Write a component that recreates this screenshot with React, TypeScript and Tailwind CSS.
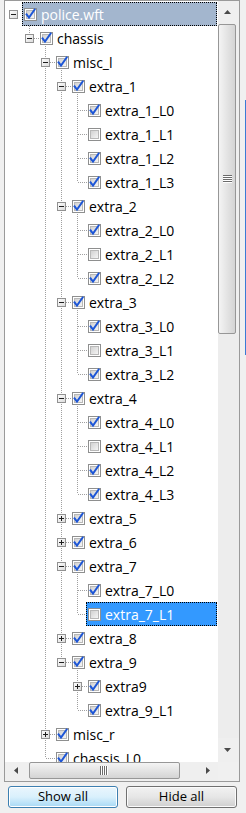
type TreeNode = {
  label: string;
  checked: boolean;
  open?: boolean;
  children?: TreeNode[];
  hl?: "root" | "sel";
};

type Row = {
  node: TreeNode;
  level: number;
  last: boolean;
  cont: boolean[];
};

const leaf = (label: string, checked = true, hl?: "sel"): TreeNode => ({ label, checked, hl });

const extra = (n: number, states: boolean[]): TreeNode => ({
  label: `extra_${n}`,
  checked: true,
  open: true,
  children: states.map((c, i) => leaf(`extra_${n}_L${i}`, c)),
});

const tree: TreeNode[] = [
  {
    label: "police.wft",
    checked: true,
    open: true,
    hl: "root",
    children: [
      {
        label: "chassis",
        checked: true,
        open: true,
        children: [
          {
            label: "misc_l",
            checked: true,
            open: true,
            children: [
              extra(1, [true, false, true, true]),
              extra(2, [true, false, true]),
              extra(3, [true, false, true]),
              extra(4, [true, false, true, true]),
              { label: "extra_5", checked: true, children: [leaf("extra_5_L0")] },
              { label: "extra_6", checked: true, children: [leaf("extra_6_L0")] },
              {
                label: "extra_7",
                checked: true,
                open: true,
                children: [leaf("extra_7_L0"), leaf("extra_7_L1", false, "sel")],
              },
              { label: "extra_8", checked: true, children: [leaf("extra_8_L0")] },
              {
                label: "extra_9",
                checked: true,
                open: true,
                children: [
                  { label: "extra9", checked: true, children: [leaf("extra9_L0")] },
                  leaf("extra_9_L1"),
                ],
              },
            ],
          },
          { label: "misc_r", checked: true, children: [leaf("extra_10")] },
          leaf("chassis_L0"),
        ],
      },
    ],
  },
];

function flatten(nodes: TreeNode[], level: number, cont: boolean[], out: Row[]) {
  nodes.forEach((node, i) => {
    const last = i === nodes.length - 1;
    out.push({ node, level, last, cont });
    if (node.children && node.open) flatten(node.children, level + 1, [...cont, !last], out);
  });
  return out;
}

const rows = flatten(tree, 0, [], []);

const DOT = "#a0a0a0";

function Lines({ row }: { row: Row }) {
  const { level, last, cont, node } = row;
  const lx = (a: number) => 8.5 + 16 * a;
  const segs: JSX.Element[] = [];
  for (let a = 1; a < level; a++) {
    if (cont[a]) segs.push(<line key={"c" + a} x1={lx(a)} y1={0} x2={lx(a)} y2={24} />);
  }
  if (level >= 1) {
    segs.push(<line key="v" x1={lx(level)} y1={0} x2={lx(level)} y2={last ? 12 : 24} />);
    segs.push(<line key="h" x1={lx(level)} y1={12.5} x2={19 + 16 * level} y2={12.5} />);
  }
  if (node.open && node.children) {
    segs.push(<line key="p" x1={lx(level + 1)} y1={20} x2={lx(level + 1)} y2={24} />);
  }
  return (
    <svg
      className="absolute inset-0 pointer-events-none"
      width="213"
      height="24"
      stroke={DOT}
      strokeWidth="1"
      strokeDasharray="1 1"
      shapeRendering="crispEdges"
    >
      {segs}
    </svg>
  );
}

function Expander({ open }: { open: boolean }) {
  return (
    <svg width="9" height="9" viewBox="0 0 9 9" className="relative">
      <defs>
        <linearGradient id="exg" x1="0" y1="0" x2="1" y2="1">
          <stop offset="0" stopColor="#ffffff" />
          <stop offset="1" stopColor="#dadada" />
        </linearGradient>
      </defs>
      <rect x="0.5" y="0.5" width="8" height="8" fill="url(#exg)" stroke="#919191" />
      <line x1="2" y1="4.5" x2="7" y2="4.5" stroke="#1e1e1e" />
      {!open && <line x1="4.5" y1="2" x2="4.5" y2="7" stroke="#1e1e1e" />}
    </svg>
  );
}

function CheckBox({ checked }: { checked: boolean }) {
  return (
    <svg width="13" height="13" viewBox="0 0 13 13" className="shrink-0">
      <defs>
        <linearGradient id="cbg" x1="0" y1="0" x2="1" y2="1">
          <stop offset="0" stopColor="#cfcfcf" />
          <stop offset="1" stopColor="#f7f7f7" />
        </linearGradient>
      </defs>
      <rect x="0.5" y="0.5" width="12" height="12" fill="#ffffff" stroke="#8e8f8f" />
      <rect x="2.5" y="2.5" width="8" height="8" fill="url(#cbg)" stroke="#b8b8b8" />
      {checked && (
        <path
          d="M2.6 6.4 L5 9.6 L10.6 1.6"
          fill="none"
          stroke="#1d56d6"
          strokeWidth="2"
          strokeLinecap="square"
        />
      )}
    </svg>
  );
}

function TreeRow({ row }: { row: Row }) {
  const { node, level } = row;
  const hasKids = !!node.children;
  const hl =
    node.hl === "root"
      ? "bg-[#a3b6ce] text-white outline outline-1 outline-dotted outline-black -outline-offset-1"
      : node.hl === "sel"
        ? "bg-[#3399ff] text-white outline outline-1 outline-dotted outline-black -outline-offset-1"
        : "text-black";
  return (
    <div className="relative flex h-[24px] items-center">
      <Lines row={row} />
      <div className="shrink-0" style={{ width: level * 16 }} />
      <div className="flex w-[17px] shrink-0 items-center pl-[4px]">
        {hasKids && <Expander open={!!node.open} />}
      </div>
      <div className={`relative mr-[1px] flex h-[24px] min-w-0 flex-1 items-center gap-[4px] pl-[2px] ${hl}`}>
        <CheckBox checked={node.checked} />
        <span className="whitespace-nowrap">{node.label}</span>
      </div>
    </div>
  );
}

function Tri({ dir }: { dir: "up" | "down" | "left" | "right" }) {
  const pts = {
    up: "0,4 7,4 3.5,0",
    down: "0,0 7,0 3.5,4",
    left: "4,0 4,7 0,3.5",
    right: "0,0 0,7 4,3.5",
  }[dir];
  const w = dir === "up" || dir === "down" ? 7 : 4;
  const h = dir === "up" || dir === "down" ? 4 : 7;
  return (
    <svg width={w} height={h} viewBox={`0 0 ${w} ${h}`}>
      <polygon points={pts} fill="#4a4a4a" />
    </svg>
  );
}

function VGrip() {
  return (
    <svg width="9" height="9" viewBox="0 0 9 9">
      {[0.5, 2.5, 4.5, 6.5].map((y) => (
        <line key={y} x1="0" y1={y} x2="9" y2={y} stroke="#6b6b6b" />
      ))}
      {[1.5, 3.5, 5.5, 7.5].map((y) => (
        <line key={y} x1="0" y1={y} x2="9" y2={y} stroke="#ffffff" />
      ))}
    </svg>
  );
}

function HGrip() {
  return (
    <svg width="9" height="9" viewBox="0 0 9 9">
      {[0.5, 2.5, 4.5, 6.5].map((x) => (
        <line key={x} x1={x} y1="0" x2={x} y2="9" stroke="#6b6b6b" />
      ))}
      {[1.5, 3.5, 5.5, 7.5].map((x) => (
        <line key={x} x1={x} y1="0" x2={x} y2="9" stroke="#ffffff" />
      ))}
    </svg>
  );
}

export default function App() {
  return (
    <div
      className="flex h-[813px] w-[246px] overflow-hidden bg-[#f0f0f0] text-[14px]"
      style={{ fontFamily: '"Open Sans", "Liberation Sans", sans-serif' }}
    >
      <div className="flex w-[240px] flex-col pl-[4px]">
        {/* tree box */}
        <div className="flex h-[782px] w-[236px] flex-col border border-[#9a9a9a] bg-white">
          <div className="flex h-[761px]">
            <div className="w-[213px] overflow-hidden pt-[1px]">
              {rows.map((r, i) => (
                <TreeRow key={i} row={r} />
              ))}
            </div>
            {/* vertical scrollbar */}
            <div className="flex w-[21px] flex-col bg-[#efefef]">
              <div className="flex h-[22px] items-center justify-center pr-[3px]">
                <Tri dir="up" />
              </div>
              <div className="mt-[1px] flex h-[310px] w-[18px] items-center justify-center rounded-[2px] border border-[#979797] bg-gradient-to-r from-[#f4f4f4] to-[#d4d4d4]">
                <VGrip />
              </div>
              <div className="flex-1 bg-[#ededed]" />
              <div className="flex h-[24px] items-start justify-center pr-[3px] pt-[10px]">
                <Tri dir="down" />
              </div>
            </div>
          </div>
          {/* horizontal scrollbar */}
          <div className="flex h-[19px] bg-[#efefef]">
            <div className="flex w-[213px] items-start">
              <div className="flex h-[17px] w-[22px] items-center justify-center">
                <Tri dir="left" />
              </div>
              <div className="ml-[2px] flex h-[17px] w-[151px] items-center justify-center rounded-[2px] border border-[#979797] bg-gradient-to-b from-[#f4f4f4] to-[#d4d4d4]">
                <HGrip />
              </div>
              <div className="flex-1" />
              <div className="flex h-[17px] w-[21px] items-center justify-center">
                <Tri dir="right" />
              </div>
            </div>
            <div className="w-[21px] bg-[#f0f0f0]" />
          </div>
        </div>
        {/* buttons */}
        <div className="flex gap-[8px] pl-[4px] pt-[4px]">
          <button className="flex h-[22px] w-[110px] items-center justify-center rounded-[3px] border border-[#3c7fb1] bg-gradient-to-b from-[#eaf6fd] via-[#d9f0fc] to-[#a7d9f5] text-[13px] text-black shadow-[inset_0_0_0_1px_#ffffff]">
            Show all
          </button>
          <button className="flex h-[22px] w-[111px] items-center justify-center rounded-[3px] border border-[#707070] bg-gradient-to-b from-[#f2f2f2] via-[#e6e6e6] to-[#cfcfcf] text-[13px] text-black shadow-[inset_0_0_0_1px_#fbfbfb]">
            Hide all
          </button>
        </div>
      </div>
      <div className="flex w-[6px] justify-end pt-[100px]">
        <div className="h-[255px] w-[1px] bg-[#3a7bd5]" />
      </div>
    </div>
  );
}
